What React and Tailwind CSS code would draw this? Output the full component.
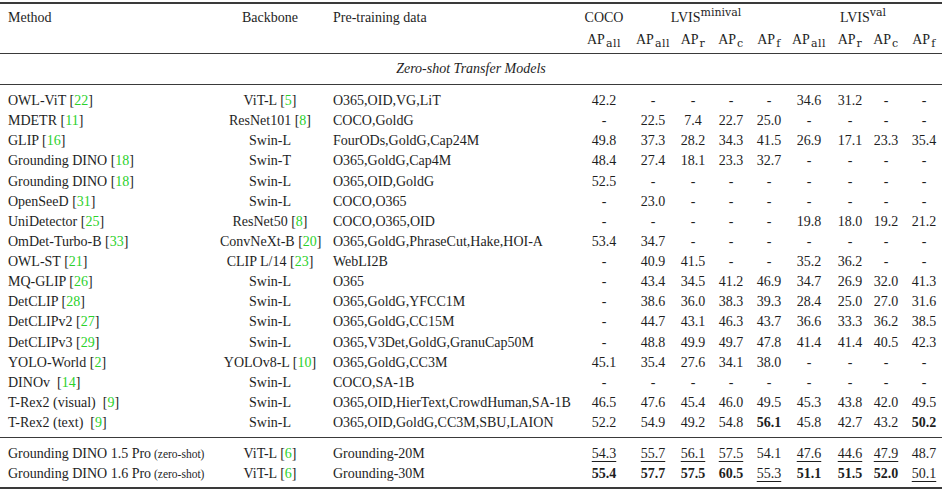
import React from "react";

const COLS =
  "grid grid-cols-[220px_100px_260px_48px_50px_30px_46px_30px_50px_32px_40px_36px]";

const rows = [
  ["OWL-ViT", "22", "ViT-L", "5", "O365,OID,VG,LiT", ["42.2", "-", "-", "-", "-", "34.6", "31.2", "-", "-"]],
  ["MDETR", "11", "ResNet101", "8", "COCO,GoldG", ["-", "22.5", "7.4", "22.7", "25.0", "-", "-", "-", "-"]],
  ["GLIP", "16", "Swin-L", null, "FourODs,GoldG,Cap24M", ["49.8", "37.3", "28.2", "34.3", "41.5", "26.9", "17.1", "23.3", "35.4"]],
  ["Grounding DINO", "18", "Swin-T", null, "O365,GoldG,Cap4M", ["48.4", "27.4", "18.1", "23.3", "32.7", "-", "-", "-", "-"]],
  ["Grounding DINO", "18", "Swin-L", null, "O365,OID,GoldG", ["52.5", "-", "-", "-", "-", "-", "-", "-", "-"]],
  ["OpenSeeD", "31", "Swin-L", null, "COCO,O365", ["-", "23.0", "-", "-", "-", "-", "-", "-", "-"]],
  ["UniDetector", "25", "ResNet50", "8", "COCO,O365,OID", ["-", "-", "-", "-", "-", "19.8", "18.0", "19.2", "21.2"]],
  ["OmDet-Turbo-B", "33", "ConvNeXt-B", "20", "O365,GoldG,PhraseCut,Hake,HOI-A", ["53.4", "34.7", "-", "-", "-", "-", "-", "-", "-"]],
  ["OWL-ST", "21", "CLIP L/14", "23", "WebLI2B", ["-", "40.9", "41.5", "-", "-", "35.2", "36.2", "-", "-"]],
  ["MQ-GLIP", "26", "Swin-L", null, "O365", ["-", "43.4", "34.5", "41.2", "46.9", "34.7", "26.9", "32.0", "41.3"]],
  ["DetCLIP", "28", "Swin-L", null, "O365,GoldG,YFCC1M", ["-", "38.6", "36.0", "38.3", "39.3", "28.4", "25.0", "27.0", "31.6"]],
  ["DetCLIPv2", "27", "Swin-L", null, "O365,GoldG,CC15M", ["-", "44.7", "43.1", "46.3", "43.7", "36.6", "33.3", "36.2", "38.5"]],
  ["DetCLIPv3", "29", "Swin-L", null, "O365,V3Det,GoldG,GranuCap50M", ["-", "48.8", "49.9", "49.7", "47.8", "41.4", "41.4", "40.5", "42.3"]],
  ["YOLO-World", "2", "YOLOv8-L", "10", "O365,GoldG,CC3M", ["45.1", "35.4", "27.6", "34.1", "38.0", "-", "-", "-", "-"]],
  ["DINOv ", "14", "Swin-L", null, "COCO,SA-1B", ["-", "-", "-", "-", "-", "-", "-", "-", "-"]],
  ["T-Rex2 (visual) ", "9", "Swin-L", null, "O365,OID,HierText,CrowdHuman,SA-1B", ["46.5", "47.6", "45.4", "46.0", "49.5", "45.3", "43.8", "42.0", "49.5"]],
  ["T-Rex2 (text) ", "9", "Swin-L", null, "O365,OID,GoldG,CC3M,SBU,LAION", ["52.2", "54.9", "49.2", "54.8", "**56.1", "45.8", "42.7", "43.2", "**50.2"]],
];

const proRows = [
  ["1.5", "Grounding-20M", ["_54.3", "_55.7", "_56.1", "_57.5", "54.1", "_47.6", "_44.6", "_47.9", "48.7"]],
  ["1.6", "Grounding-30M", ["**55.4", "**57.7", "**57.5", "**60.5", "_55.3", "**51.1", "**51.5", "**52.0", "_50.1"]],
];

function Cite({ n }) {
  return (
    <>
      [<span className="text-[#2bd12b]">{n}</span>]
    </>
  );
}

function Val({ v }) {
  if (v.startsWith("**")) return <span className="font-bold">{v.slice(2)}</span>;
  if (v.startsWith("_"))
    return <span className="underline decoration-1 underline-offset-[3px]">{v.slice(1)}</span>;
  return <span>{v}</span>;
}

function Sub({ t }) {
  return (
    <span className="font-['DejaVu_Serif'] text-[11px] tracking-[0.5px] relative top-[3px] ml-[1px]">{t}</span>
  );
}

function AP({ s }) {
  return (
    <div className="text-center whitespace-nowrap">
      AP<Sub t={s} />
    </div>
  );
}

function Row({ method, cite, backbone, bcite, data, vals, small }) {
  return (
    <div className={`${COLS} h-[20.125px] items-center leading-none`}>
      <div className="pl-[8px] whitespace-pre">
        {method}
        {small && <span className="text-[11.5px]"> (zero-shot)</span>}
        {cite && (
          <>
            {" "}
            <Cite n={cite} />
          </>
        )}
      </div>
      <div className="text-center whitespace-nowrap">
        {backbone}
        {bcite && (
          <>
            {" "}
            <Cite n={bcite} />
          </>
        )}
      </div>
      <div className="pl-[13px] whitespace-nowrap">{data}</div>
      {vals.map((v, i) => (
        <div key={i} className="text-center">
          <Val v={v} />
        </div>
      ))}
    </div>
  );
}

export default function App() {
  return (
    <div className="w-[946px] h-[493px] bg-white text-[14px] text-[#1e1e1e] font-['Liberation_Serif',serif] overflow-hidden">
      <div className="w-[942px] pt-[2px]">
        {/* header */}
        <div className="border-t-2 border-b border-[#3a3a3a] pt-[4px] pb-[3px]">
          <div className={`${COLS} h-[20px] items-center leading-none`}>
            <div className="pl-[8px]">Method</div>
            <div className="text-center">Backbone</div>
            <div className="pl-[13px]">Pre-training data</div>
            <div className="text-center">COCO</div>
            <div className="col-span-4 text-center">
              LVIS
              <span className="font-['DejaVu_Serif'] text-[11px] relative -top-[6px]">minival</span>
            </div>
            <div className="col-span-4 text-center">
              LVIS
              <span className="font-['DejaVu_Serif'] text-[11px] relative -top-[6px]">val</span>
            </div>
          </div>
          <div className={`${COLS} h-[20px] mt-[2px] items-center leading-none`}>
            <div />
            <div />
            <div />
            <AP s="all" />
            <AP s="all" />
            <AP s="r" />
            <AP s="c" />
            <AP s="f" />
            <AP s="all" />
            <AP s="r" />
            <AP s="c" />
            <AP s="f" />
          </div>
        </div>
        {/* section title */}
        <div className="h-[31px] flex items-center justify-center italic border-b border-[#3a3a3a] pb-[2px]">
          Zero-shot Transfer Models
        </div>
        {/* body */}
        <div className="pt-[6px] pb-[4px] border-b-[1.5px] border-[#3a3a3a]">
          {rows.map((r, i) => (
            <Row key={i} method={r[0]} cite={r[1]} backbone={r[2]} bcite={r[3]} data={r[4]} vals={r[5]} />
          ))}
        </div>
        <div className="pt-[6px] pb-[3px] border-b-2 border-[#3a3a3a]">
          {proRows.map((r, i) => (
            <Row
              key={i}
              method={`Grounding DINO ${r[0]} Pro`}
              small
              backbone="ViT-L"
              bcite="6"
              data={r[1]}
              vals={r[2]}
            />
          ))}
        </div>
      </div>
    </div>
  );
}
